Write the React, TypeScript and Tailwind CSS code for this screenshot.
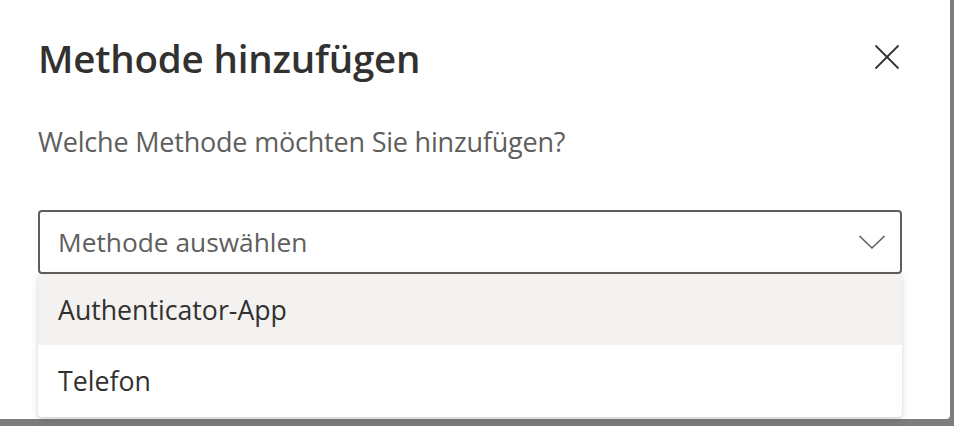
import React from "react";

export default function App() {
  return (
    <div className="w-[954px] h-[426px] bg-[#7d7d7d] overflow-hidden" style={{ fontFamily: '"Open Sans", "Noto Sans", sans-serif' }}>
      <div className="relative w-[950px] h-[419px] bg-white rounded-br-[4px] pl-[38px] pr-[48px] pt-[34px]">
        <div className="flex items-start justify-between">
          <h1 className="text-[38.5px] leading-[48px] font-semibold text-[#323130] tracking-[-0.2px]">Methode hinzufügen</h1>
          <button className="mt-[10px] mr-[2px] w-[26px] h-[26px] flex items-center justify-center">
            <svg width="26" height="26" viewBox="0 0 26 26">
              <line x1="1.5" y1="1.5" x2="24.5" y2="24.5" stroke="#323130" strokeWidth="1.8" />
              <line x1="24.5" y1="1.5" x2="1.5" y2="24.5" stroke="#323130" strokeWidth="1.8" />
            </svg>
          </button>
        </div>
        <p className="mt-[42px] text-[27px] leading-[36px] text-[#605e5c] tracking-[-0.2px]">Welche Methode möchten Sie hinzufügen?</p>
        <div className="relative mt-[50px]">
          <div className="h-[64px] border-2 border-[#605e5c] rounded-[4px] flex items-center justify-between pl-[18px] pr-[14px]">
            <span className="text-[26.3px] leading-[34px] text-[#605e5c]">Methode auswählen</span>
            <svg width="28" height="16" viewBox="0 0 28 16">
              <polyline points="1.5,2 14,14 26.5,2" fill="none" stroke="#605e5c" strokeWidth="1.6" />
            </svg>
          </div>
          <div className="absolute left-0 right-0 top-full bg-white rounded-b-[4px] overflow-hidden shadow-[0_3px_8px_rgba(0,0,0,0.13),0_1px_2px_rgba(0,0,0,0.1)]">
            <div className="h-[71px] bg-[#f3f2f1] flex items-center pl-[20px]">
              <span className="text-[26.7px] leading-[34px] text-[#323130]">Authenticator-App</span>
            </div>
            <div className="h-[72px] flex items-center pl-[20px]">
              <span className="text-[26.7px] leading-[34px] text-[#323130]">Telefon</span>
            </div>
          </div>
        </div>
      </div>
    </div>
  );
}
